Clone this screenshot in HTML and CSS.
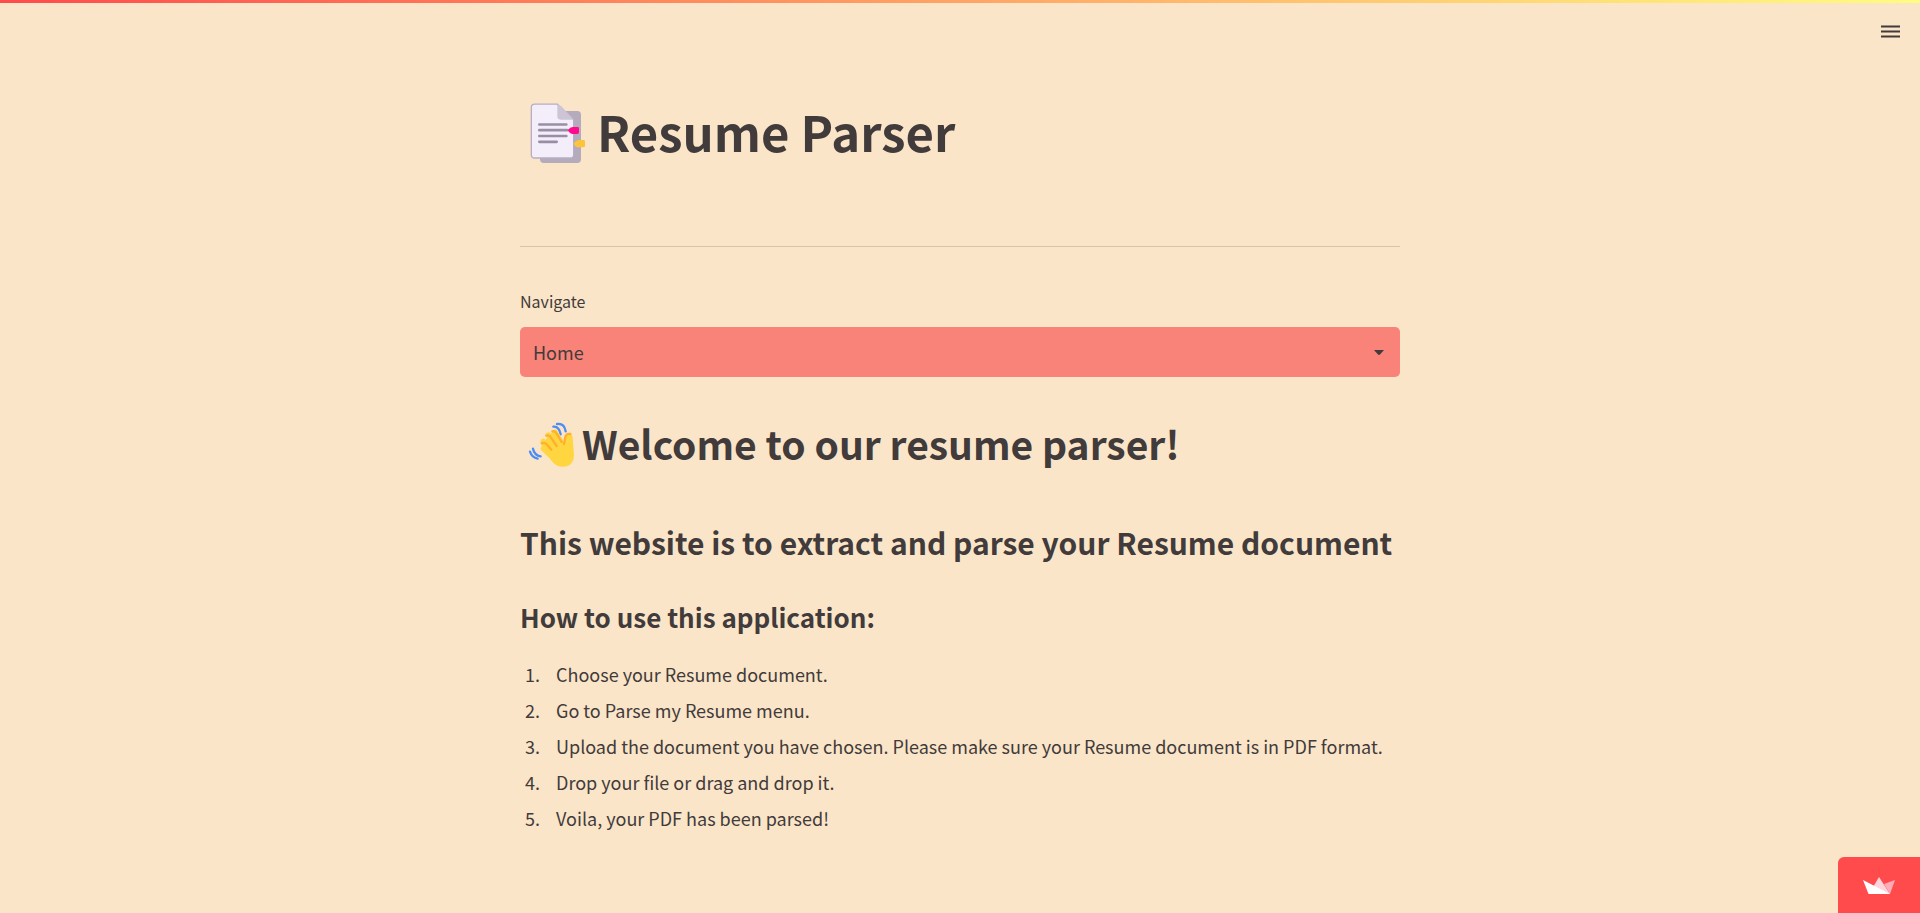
FILE: index.html
```html
<!DOCTYPE html>
<html lang="en">
<head>
<meta charset="utf-8">
<meta name="viewport" content="width=device-width, initial-scale=1">
<title>Resume Parser</title>
<link rel="stylesheet" href="styles.css">
</head>
<body>
<header class="toolbar">
  <button class="menu-button" type="button" aria-label="Main menu">
    <svg width="20" height="14" viewBox="0 0 20 14" aria-hidden="true"><path d="M0 1.5h19M0 6.5h19M0 11.5h19" stroke="#413b3b" stroke-width="2.2"/></svg>
  </button>
</header>
<main class="content">
  <h1 class="title">
    <svg class="title-icon" viewBox="0 6 225 198" aria-hidden="true">
      <rect x="60" y="45" width="123" height="156" rx="11" fill="#b4abbd"/>
      <path d="M44 24.500h68L161 72v104q0 10-10 10H44q-10 0-10-10V35q0-10.500 10-10.500z" fill="#f3eefa" stroke="#b7aec4" stroke-width="4"/>
      <path d="M112 26q7 0 12 5l37 40H122q-10 0-10-10z" fill="#cdc5d6"/>
      <path d="M58 85.500h81M58 102.500h84M58 120h81M58 137.500h52" stroke="#998ea5" stroke-width="8" stroke-linecap="round"/>
      <path d="M143 103q8-10 15-10h15q4 0 4 4v12q0 5-5 5h-14q-8 0-15-11z" fill="#ff0a8e"/>
      <path d="M160 143q8-11 16-11h15q4 0 4 4v13q0 5-5 5h-14q-9 0-16-11z" fill="#fbc43b"/>
    </svg>
    <span>Resume Parser</span>
  </h1>
  <hr class="divider">
  <label class="field-label" for="navigate">Navigate</label>
  <div class="select-box">
    <select class="select" id="navigate">
      <option selected>Home</option>
      <option>Parse my Resume</option>
    </select>
    <svg class="select-arrow" viewBox="0 0 10 5" aria-hidden="true"><path d="M0 0h10L6 4.500q-1 .8-2 0z" fill="#413b3b"/></svg>
  </div>
  <h2 class="welcome">
    <svg class="welcome-icon" viewBox="0 15 180 162" aria-hidden="true">
      <path d="M100 47q17-2 22 23M111 39q22-3 26 22M39 113q4 20 23 23M30 122q6 18 23 21" fill="none" stroke="#4c8df6" stroke-width="7" stroke-linecap="round"/>
      <path d="M66 98q-3 10 5 18l26 36q16 20 43 14 22-7 22-34l-4-52q-1-10-10-11-11-1-14 11l-3 18-15-32q-6-10-15-7z" fill="#ffd640"/>
      <path d="M70 113l36 34M70 91l36 40M85 72l32 46M105 64l29 46" stroke="#ffd640" stroke-width="16" stroke-linecap="round"/>
      <path d="M65 97q9-4 16 4l13 15M79 74q9-3 14 6l17 25M97 61q9-2 13 7l15 25M132 99l4-21q3-11 15-9" fill="none" stroke="#ffb02e" stroke-width="7" stroke-linecap="round"/>
    </svg>
    <span>Welcome to our resume parser!</span>
  </h2>
  <h3 class="summary">This website is to extract and parse your Resume document</h3>
  <h4 class="how-to">How to use this application:</h4>
  <ol class="steps">
    <li>Choose your Resume document.</li>
    <li>Go to Parse my Resume menu.</li>
    <li>Upload the document you have chosen. Please make sure your Resume document is in PDF format.</li>
    <li>Drop your file or drag and drop it.</li>
    <li>Voila, your PDF has been parsed!</li>
  </ol>
</main>
<a class="badge" href="#" aria-label="Hosted with Streamlit">
  <svg width="32" height="17" viewBox="0 0 32 17" aria-hidden="true">
    <path d="M16 0l11 17H6z" fill="#ffd5dc"/>
    <path d="M32 3l-5 14-6-10z" fill="#ffabb8"/>
    <path d="M0 3l27 14H5.500z" fill="#fff"/>
  </svg>
</a>
</body>
</html>
```
FILE: styles.css
```css
* {
  box-sizing: border-box;
}

body {
  margin: 0;
  min-height: 100vh;
  background: #fbe5c8;
  color: #413b3b;
  font-family: "Noto Sans CJK SC", "Noto Sans", sans-serif;
  font-size: 18px;
  line-height: 36px;
}

.toolbar {
  display: flex;
  justify-content: flex-end;
  height: 61px;
  padding: 11px 10px 0;
  border-top: 3px solid;
  border-image: linear-gradient(90deg, #ff4b4b, #fffd80) 1;
}

.menu-button {
  display: grid;
  place-items: center;
  width: 38px;
  height: 36px;
  padding: 0;
  border: 0;
  background: none;
  cursor: pointer;
}

.content {
  max-width: 920px;
  margin: 0 auto;
  padding: 36px 20px;
}

.title,
.welcome {
  display: flex;
  align-items: center;
  gap: 2px;
  margin: 0;
}

.title {
  font-size: 49px;
  line-height: 68px;
}

.title-icon {
  flex: none;
  width: 75px;
  height: 66px;
}

.divider {
  height: 1px;
  margin: 81px 0 42px;
  border: 0;
  background: #d5c3ac;
}

.field-label {
  display: block;
  margin-bottom: 14px;
  font-size: 16px;
  line-height: 24px;
}

.select-box {
  display: grid;
  align-items: center;
  margin-bottom: 38px;
}

.select,
.select-arrow {
  grid-area: 1 / 1;
}

.select {
  width: 100%;
  height: 50px;
  padding: 0 40px 0 13px;
  border: 0;
  border-radius: 5px;
  background: #f98379;
  color: inherit;
  font: inherit;
  appearance: none;
}

.select-arrow {
  justify-self: end;
  width: 10px;
  height: 5px;
  margin-right: 16px;
  pointer-events: none;
}

.welcome {
  font-size: 39px;
  font-weight: 600;
  line-height: 56px;
}

.welcome-icon {
  flex: none;
  width: 60px;
  height: 54px;
}

.summary {
  margin: 50px 0 36px;
  font-size: 30px;
  font-weight: 600;
  line-height: 42px;
}

.how-to {
  margin: 0 0 21px;
  font-size: 26px;
  font-weight: 600;
  line-height: 36px;
}

.steps {
  margin: 0;
  padding-left: 24px;
}

.steps li {
  padding-left: 12px;
}

.badge {
  position: fixed;
  right: 0;
  bottom: 0;
  display: grid;
  place-items: center;
  width: 82px;
  height: 56px;
  border-radius: 6px 0 0;
  background: #ff4b4b;
}
```
